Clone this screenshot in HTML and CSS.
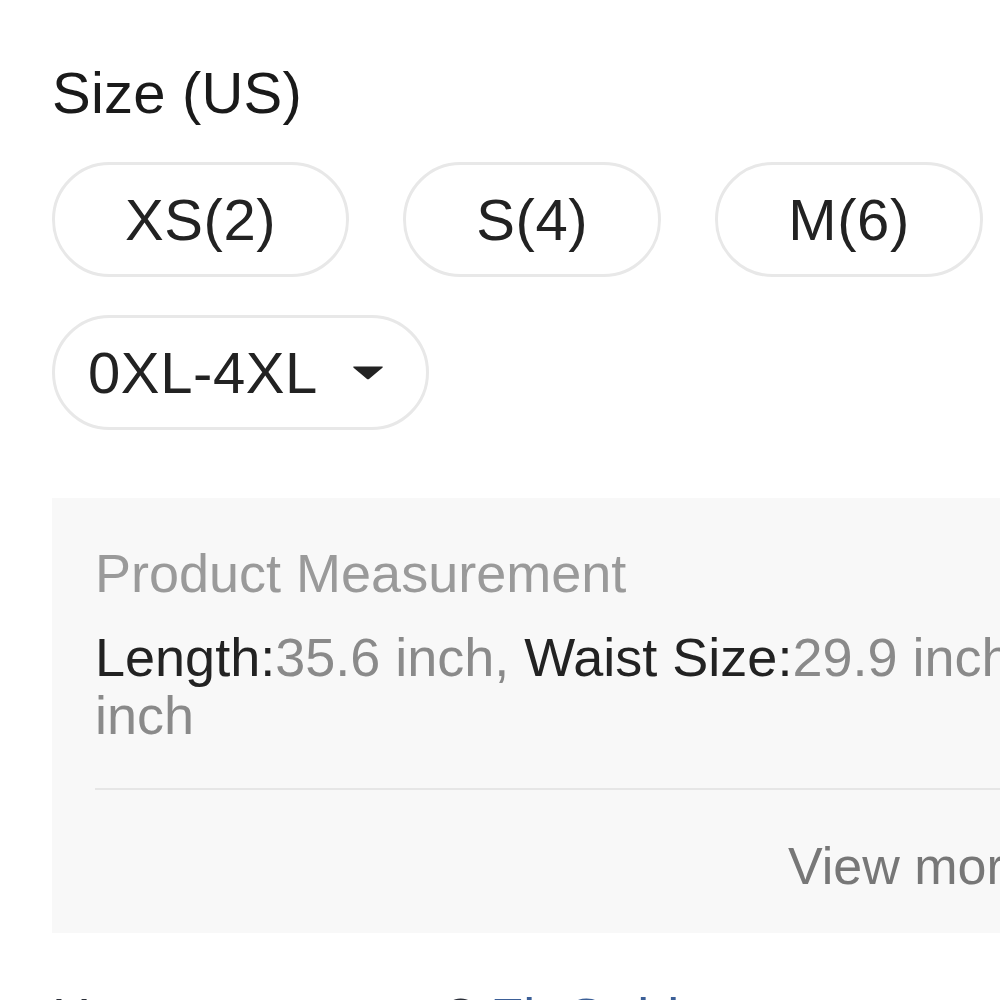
FILE: index.html
```html
<!DOCTYPE html>
<html lang="en">
<head>
<meta charset="utf-8">
<title>Size (US)</title>
<link rel="stylesheet" href="styles.css">
</head>
<body>
<div class="page">
  <h2 class="title">Size (US)</h2>
  <div class="sizes">
    <button class="pill">XS(2)</button>
    <button class="pill">S(4)</button>
    <button class="pill">M(6)</button>
    <button class="pill">L(8)</button>
    <button class="pill pill-drop">0XL-4XL
      <svg class="caret" width="32" height="15" viewBox="0 0 32 15"><path d="M2 1.5 H30 Q31.5 1.5 30.4 2.7 L17.3 13.8 Q16 14.9 14.7 13.8 L1.6 2.7 Q0.5 1.5 2 1.5 Z" fill="#222"/></svg>
    </button>
  </div>
  <div class="measure">
    <div class="m-title">Product Measurement</div>
    <div class="m-text"><span class="lbl">Length:</span><span class="val">35.6 inch, </span><span class="lbl">Waist Size:</span><span class="val">29.9 inch, </span><span class="lbl">Hip Size:</span><span class="val">40.2 inch</span></div>
    <div class="m-foot"><a class="more">View more</a></div>
  </div>
  <p class="help"><span class="help-dark">How to measure?</span> <span class="help-blue">Fit Guide</span></p>
</div>
</body>
</html>
```
FILE: styles.css
```css
html, body {
  margin: 0;
  padding: 0;
  background: #ffffff;
  overflow: hidden;
}
body {
  font-family: "Liberation Sans", Arial, sans-serif;
  color: #1f1f1f;
}
.page {
  width: 1406px;
  padding: 60px 0 0 52px;
}
.title {
  margin: 0;
  font-size: 58px;
  line-height: 66px;
  font-weight: 400;
  color: #1a1a1a;
  letter-spacing: 0.2px;
}
.sizes {
  display: flex;
  flex-wrap: wrap;
  gap: 38px 54px;
  margin-top: 36px;
}
.pill {
  display: inline-flex;
  align-items: center;
  height: 115px;
  box-sizing: border-box;
  padding: 0 70px;
  border: 3px solid #e8e8e8;
  border-radius: 58px;
  background: #ffffff;
  font-family: inherit;
  font-size: 58px;
  letter-spacing: 0.6px;
  color: #222222;
}
.pill-drop {
  padding: 0 42px 0 33px;
  gap: 34px;
}
.caret {
  display: block;
}
.measure {
  margin-top: 68px;
  background: #f8f8f8;
  padding: 45px 43px 38px;
}
.m-title {
  font-size: 54px;
  line-height: 60px;
  color: #9a9a9a;
}
.m-text {
  margin-top: 25px;
  font-size: 54px;
  line-height: 58px;
}
.lbl {
  color: #222222;
}
.val {
  color: #8a8a8a;
}
.m-foot {
  margin-top: 44px;
  border-top: 2px solid #e6e6e6;
  padding: 47px 0 0 693px;
}
.more {
  font-size: 52px;
  line-height: 58px;
  color: #777777;
}
.help {
  margin: 55px 0 0;
  font-size: 54px;
  line-height: 58px;
}
.help-dark {
  color: #2b2f38;
}
.help-blue {
  color: #3b5f97;
}
```
